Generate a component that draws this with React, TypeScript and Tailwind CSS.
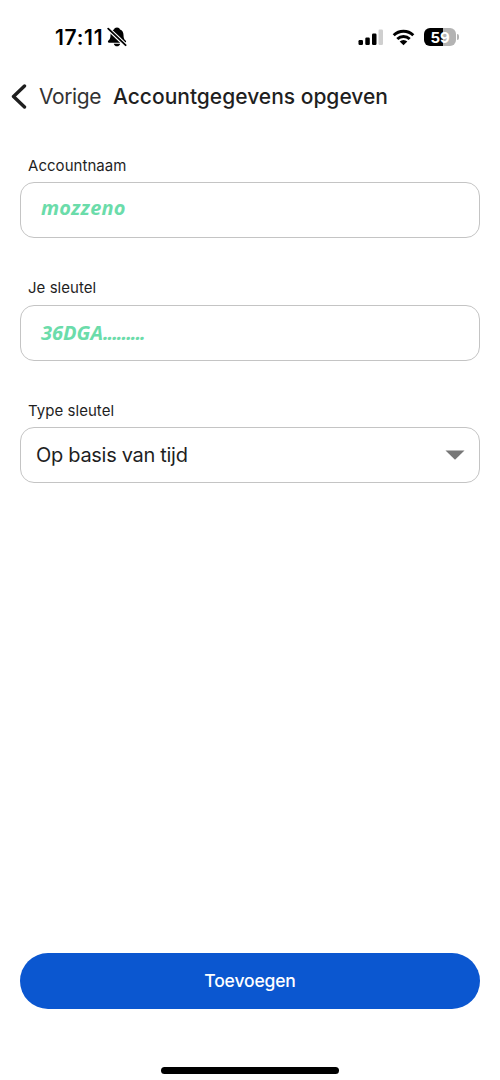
import React from 'react';

const StatusBar: React.FC = () => (
  <div className="flex h-[74px] shrink-0 items-center justify-between pl-[55px] pr-[41px] text-black">
    <div className="flex items-center">
      <span className="w-[51px] whitespace-nowrap font-['Inter',sans-serif] text-[21px] font-semibold leading-none tracking-[0.7px]">17:11</span>
      {/* Muted bell */}
      <svg className="ml-[1px] h-[20px] w-[20px]" viewBox="0 0 20 20">
        <path d="M10 .5c-1.600 0-2.700.9-3 2.100C4.700 3.500 3.500 5.500 3.500 8c0 3.300-.7 4.300-2.100 5.600-.9.900-.5 2.200.7 2.200h15.800c1.200 0 1.600-1.300.7-2.200-1.400-1.300-2.100-2.300-2.100-5.600 0-2.500-1.200-4.500-3.500-5.400C12.700 1.400 11.600.5 10 .5zM6.800 16.700h6.400c-.2 1.500-1.600 2.600-3.200 2.600s-3-1.100-3.200-2.600z" />
        <path d="M1.200 1.600 18.600 18.200" stroke="#fff" strokeWidth="4" />
        <path d="M1.200 1.600 18.600 18.200" stroke="#000" strokeWidth="1.800" strokeLinecap="round" />
      </svg>
    </div>

    <div className="flex items-center">
      {/* Signal */}
      <svg className="h-[17px] w-[26px]" viewBox="0 0 26 17">
        <rect x="0.500" y="11" width="4.500" height="5" rx="1.200" />
        <rect x="7.300" y="8.500" width="4.500" height="7.500" rx="1.200" />
        <rect x="14" y="4.500" width="4.500" height="11.500" rx="1.200" />
        <rect x="20.500" y="0.500" width="4.500" height="15.500" rx="1.200" fill="#cfcfcf" />
      </svg>
      {/* Wifi */}
      <svg className="ml-[8px] h-[17px] w-[23px]" viewBox="0 0 23 17">
        <g fill="none" stroke="#000" strokeWidth="2.900">
          <path d="M1.700 6.200a14 14 0 0 1 19.600 0" />
          <path d="M5.300 10a8.900 8.900 0 0 1 12.400 0" />
        </g>
        <path d="M11.500 16.300 7.700 12.500a5.500 5.500 0 0 1 7.600 0z" />
      </svg>
      {/* Battery */}
      <div className="ml-[9px] flex h-[18px] w-[32px] items-center justify-center rounded-[6px] bg-linear-to-r from-black from-59% to-[#b3b3b3] to-59%">
        <span className="font-['Inter',sans-serif] text-[15px] font-bold leading-none tracking-[-0.1px] text-white">59</span>
      </div>
      <div className="ml-[1px] h-[6px] w-[2px] rounded-r-full bg-[#b3b3b3]" />
    </div>
  </div>
);

interface FieldProps {
  label: string;
  children: React.ReactNode;
}

const Field: React.FC<FieldProps> = ({ label, children }) => (
  <div>
    <div className="ml-[8px] h-[20px] whitespace-nowrap pt-[0.5px] font-['Inter',sans-serif] text-[15px] leading-[20px] tracking-[0.04px]">
      {label}
    </div>
    <div className="mt-[7px] flex h-[56px] items-center rounded-[14px] border border-[#c4c4c4]">
      {children}
    </div>
  </div>
);

const App: React.FC = () => {
  return (
    <div className="flex h-[1080px] w-[500px] flex-col bg-white text-[#1f1f1f]">
      <StatusBar />

      <header className="flex h-[46px] shrink-0 items-center pl-[11px] font-['Inter',sans-serif] text-[21px]">
        <svg className="h-[26px] w-[16px]" viewBox="0 0 16 26" fill="none" stroke="#1f1f1f" strokeWidth="3.400" strokeLinecap="round" strokeLinejoin="round">
          <path d="M13.500 2 2.500 12.500l11 10.500" />
        </svg>
        <span className="ml-[12px] w-[74px] whitespace-nowrap tracking-[-0.4px] text-[#333]">Vorige</span>
        <h1 className="whitespace-nowrap font-medium">Accountgegevens opgeven</h1>
      </header>

      <main className="flex flex-col gap-[39.5px] px-[20px] pt-[35px]">
        <Field label="Accountnaam">
          <span className="-mt-[4px] ml-[20px] font-['Noto_Sans',sans-serif] text-[20px] font-bold italic leading-none tracking-[0.2px] text-[#6bdcaa]">mozzeno</span>
        </Field>
        <Field label="Je sleutel">
          <span className="ml-[20px] whitespace-nowrap font-['Noto_Sans',sans-serif] text-[20px] font-bold italic leading-none text-[#6bdcaa]">
            36DGA<span className="tracking-[-1.1px]">.........</span>
          </span>
        </Field>
        <Field label="Type sleutel">
          <span className="ml-[15px] font-['Inter',sans-serif] text-[20px] tracking-[-0.3px]">Op basis van tijd</span>
          <svg className="ml-auto mr-[14px] h-[10px] w-[20px]" viewBox="0 0 20 10">
            <path d="M0.500 0.500h19L10 9.700z" fill="#777" />
          </svg>
        </Field>
      </main>

      <footer className="mt-auto flex flex-col items-center px-[20px] pb-[6px]">
        <button className="h-[56px] w-full rounded-full bg-[#0b57d0] font-['Inter',sans-serif] text-[17.5px] font-medium tracking-[-0.15px] text-white">
          Toevoegen
        </button>
        <div className="mt-[58px] h-[7px] w-[178px] rounded-full bg-black" />
      </footer>
    </div>
  );
};

export default App;
